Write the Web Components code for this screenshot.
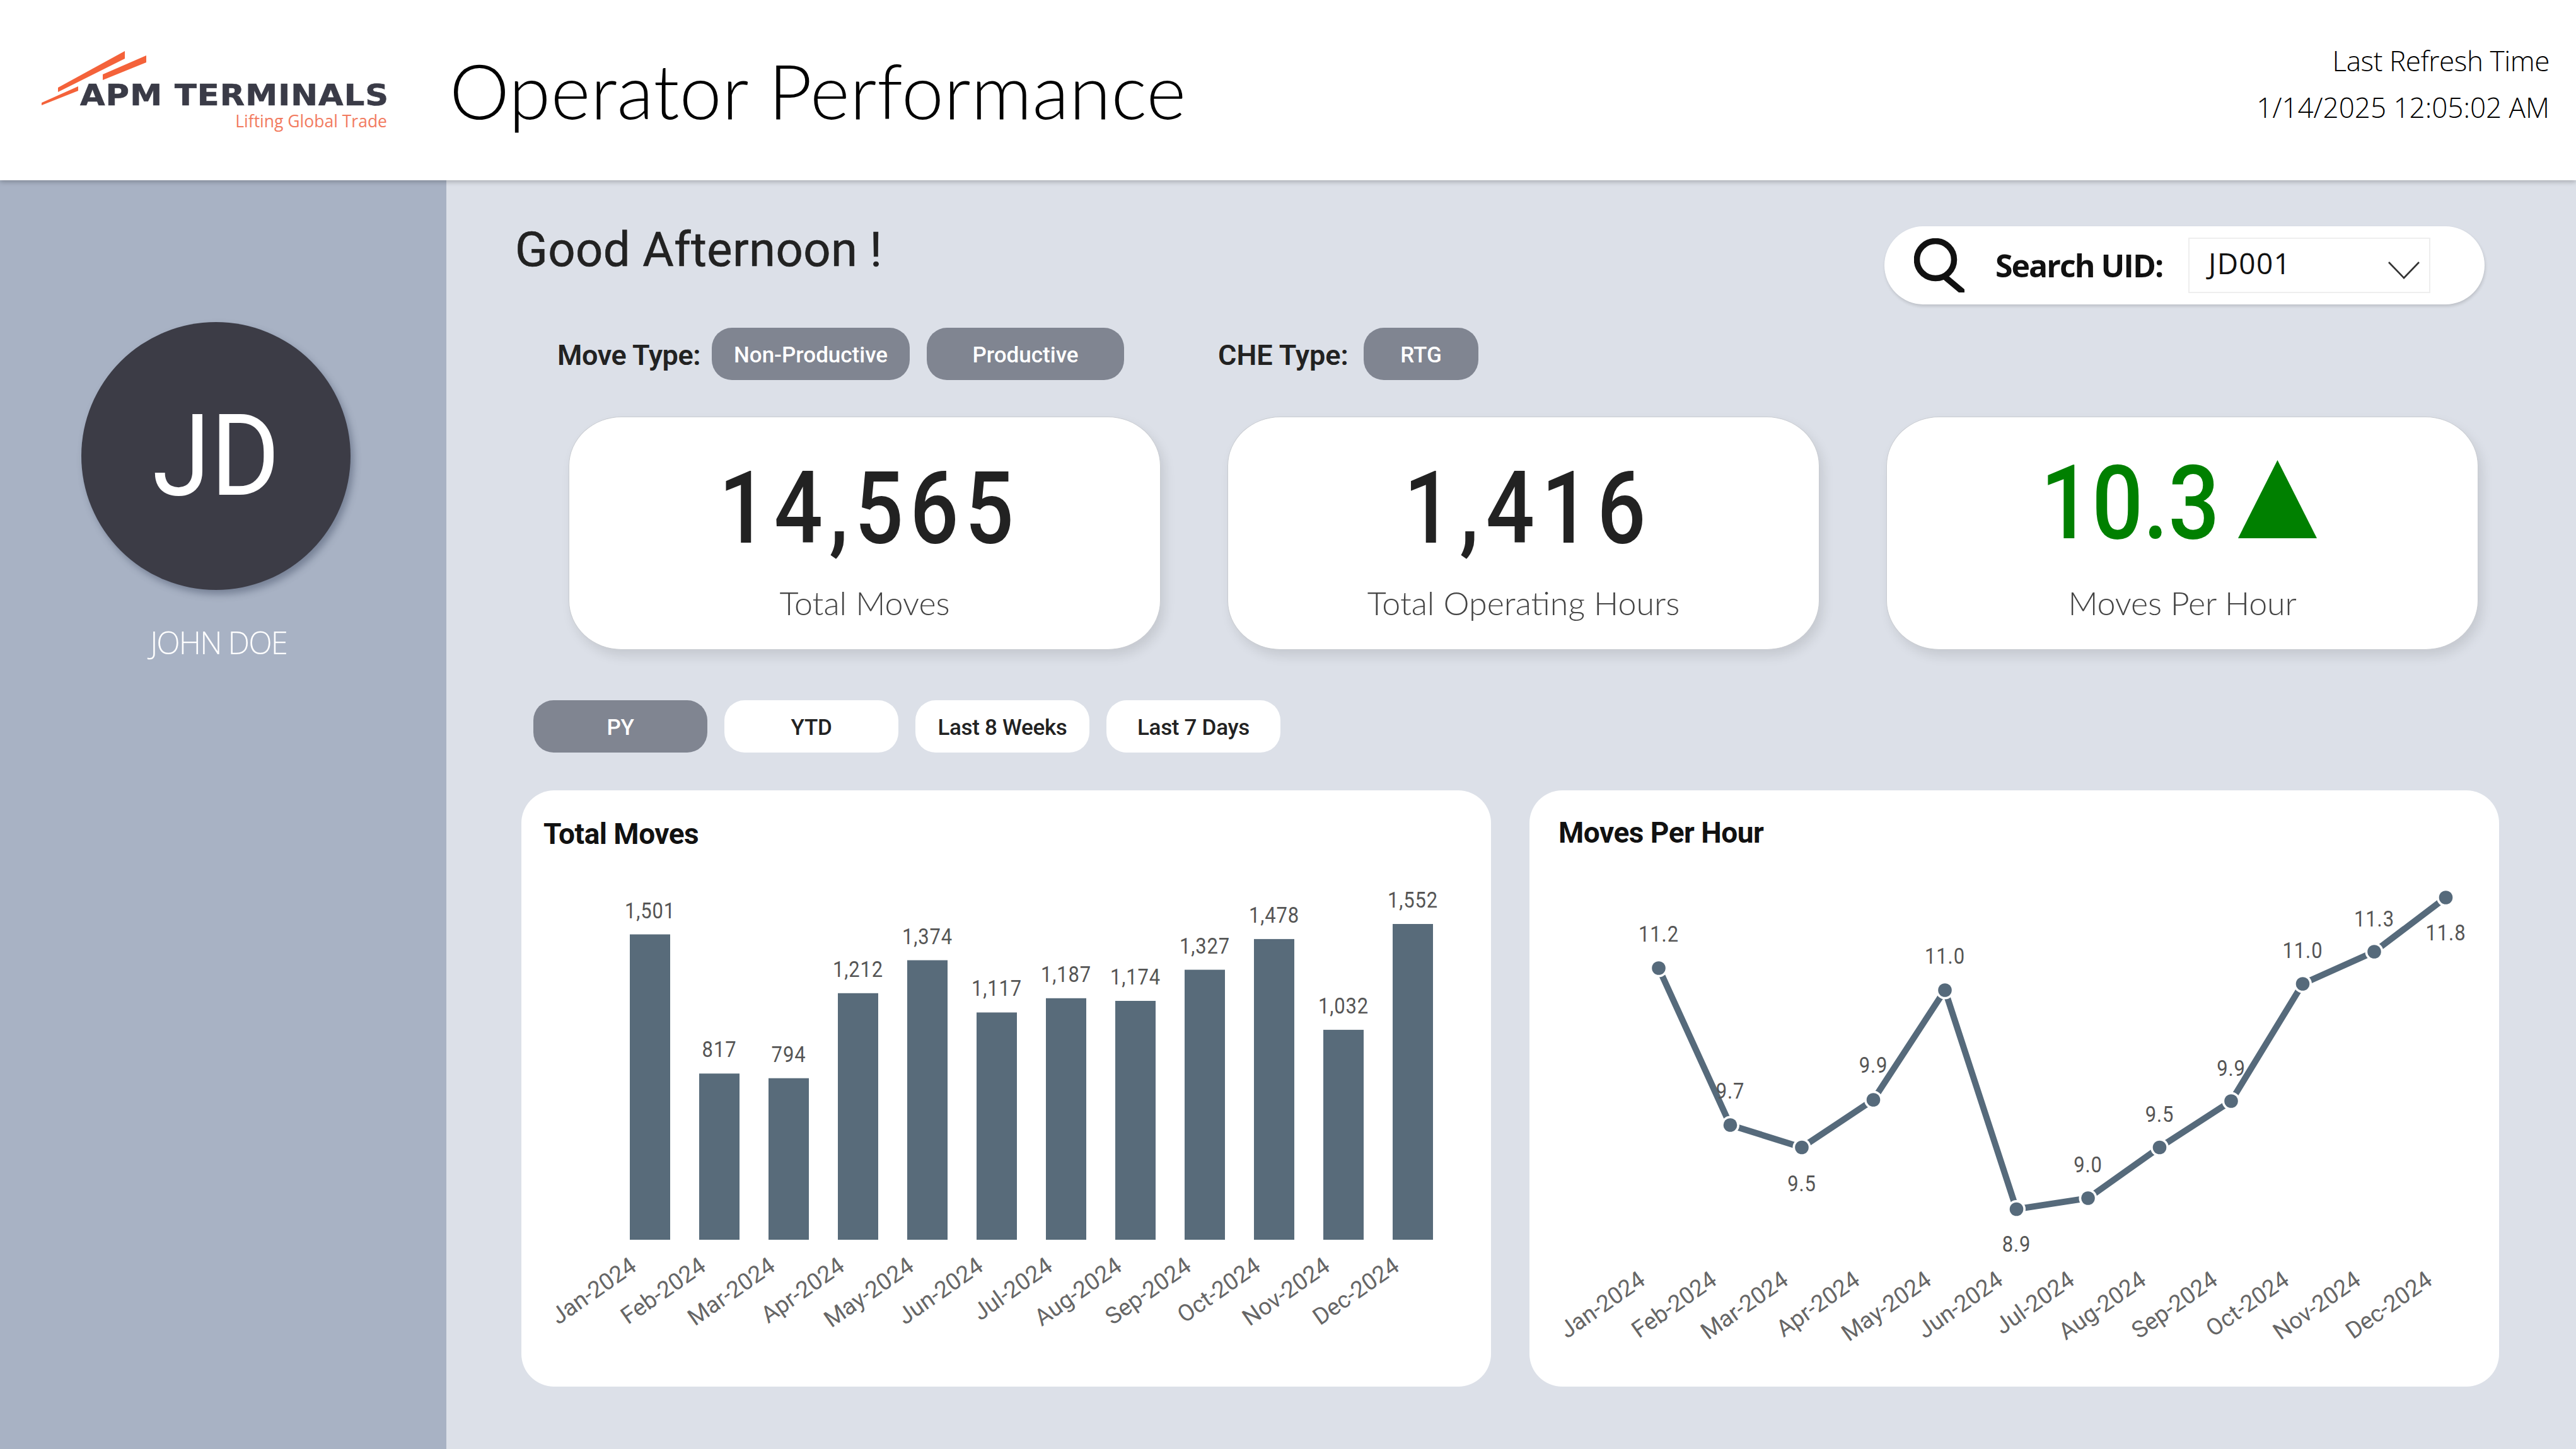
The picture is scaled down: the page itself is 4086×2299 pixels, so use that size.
<!doctype html>
<html lang="en"><head><meta charset="utf-8"><title>Operator Performance</title>
<style>html,body{margin:0;padding:0;background:#DCE0E8}body{width:4086px;height:2299px;overflow:hidden;font-family:"Open Sans",sans-serif}</style>
</head><body>
<op-dashboard>
  <op-header slot="header">
    <op-logo slot="logo"></op-logo>
    <span slot="title">Operator Performance</span>
    <op-refresh slot="refresh" label="Last Refresh Time" time="1/14/2025 12:05:02 AM"></op-refresh>
  </op-header>
  <op-profile slot="side" initials="JD" name="JOHN DOE"></op-profile>
  <op-topline slot="main" greeting="Good Afternoon !"><op-search label="Search UID:" value="JD001"></op-search></op-topline>
  <op-filters slot="main">
    <op-label style="width:250px;--ls:-.4px">Move Type:</op-label>
    <op-pill style="width:314px">Non-Productive</op-pill>
    <op-pill style="width:313px;margin-left:27px">Productive</op-pill>
    <op-label style="width:236px;margin-left:144px">CHE Type:</op-label>
    <op-pill style="width:182px">RTG</op-pill>
  </op-filters>
  <op-kpis slot="main">
    <op-kpi value="14,565" label="Total Moves"></op-kpi>
    <op-kpi value="1,416" label="Total Operating Hours" style="--ls:13px"></op-kpi>
    <op-kpi value="10.3" label="Moves Per Hour" trend style="--vx:-12px;--ls:0px;--sx:.88;--mx:-19px;--w:500;--color:#008000;--size:163px;--top:55px;--gap:46px;--lab-ls:-.2px"></op-kpi>
  </op-kpis>
  <op-tabs slot="main">
    <op-tab active>PY</op-tab><op-tab>YTD</op-tab><op-tab>Last 8 Weeks</op-tab><op-tab>Last 7 Days</op-tab>
  </op-tabs>
  <op-charts slot="main">
    <op-chart kind="bar" heading="Total Moves" style="--tx:35px;--ty:41px"></op-chart>
    <op-chart kind="line" heading="Moves Per Hour" style="--tx:46px;--ty:39px"></op-chart>
  </op-charts>
</op-dashboard>
<script>
const MONTHS=['Jan','Feb','Mar','Apr','May','Jun','Jul','Aug','Sep','Oct','Nov','Dec'];
function def(name,css,html,init){
  customElements.define(name,class extends HTMLElement{
    connectedCallback(){ if(this.shadowRoot)return;
      const r=this.attachShadow({mode:'open'});
      r.innerHTML='<style>'+css+'</style>'+(typeof html==='function'?html(this):html);
      if(init)init(this,r);
    }
  });
}
def('op-dashboard',`
:host{display:grid;width:4086px;height:2299px;grid-template-columns:708px 1fr;grid-template-rows:286px 1fr;background:#DCE0E8}
.h{grid-column:1/3;position:relative;z-index:2;box-shadow:0 3px 7px rgba(0,0,0,.22)}
.s{background:#A8B2C4;min-height:0}
.m{display:flex;flex-direction:column;min-width:0;min-height:0}`,
`<div class="h"><slot name="header"></slot></div><div class="s"><slot name="side"></slot></div><div class="m"><slot name="main"></slot></div>`);

def('op-header',`
:host{display:flex;align-items:flex-start;height:286px;background:#fff}
.logo{margin:75px 0 0 60px}
.title{margin:83px 0 0 93px;font:300 120px/120px Lato,sans-serif;letter-spacing:.5px;color:#000;white-space:nowrap}
.ref{margin:59px 42px 0 auto}`,
`<div class="logo"><slot name="logo"></slot></div><div class="title"><slot name="title"></slot></div><div class="ref"><slot name="refresh"></slot></div>`);

def('op-logo',`
:host{display:block;width:560px;height:135px}
svg{display:block}
.a{font:700 46px "DejaVu Sans",sans-serif;letter-spacing:1px;fill:#3A3B47;stroke:#3A3B47;stroke-width:.7}
.b{font:400 26.5px "Open Sans",sans-serif;fill:#F27A5E}`,
`<svg width="560" height="135" viewBox="60 75 560 135">
<polygon points="92,139 198,81 198,93 92,146" fill="#F4623A"/>
<polygon points="163,118 232,88 232,99 163,127" fill="#F4623A"/>
<polygon points="66,163 124,137 124,144 66,167" fill="#F4623A"/>
<text class="a" transform="translate(127 167) scale(1.11 1)">APM TERMINALS</text>
<text class="b" x="614" y="202" text-anchor="end">Lifting Global Trade</text>
</svg>`);

def('op-refresh',`
:host{display:block;text-align:right;font:300 44px/74px "Open Sans",sans-serif;color:#000;white-space:nowrap}
.l{letter-spacing:-.4px}`,
e=>`<div class="l">${e.getAttribute('label')}</div><div>${e.getAttribute('time')}</div>`);

def('op-profile',`
:host{display:flex;flex-direction:column;align-items:center;width:427px;margin:225px 0 0 129px}
.av{width:427px;height:425px;border-radius:50%;background:#3C3C46;color:#fff;display:flex;align-items:center;justify-content:center;
font:400 180px Roboto,sans-serif;box-shadow:5px 7px 12px rgba(60,70,95,.45)}
.av span{display:inline-block;transform:scaleX(.93)}
.n{margin-top:53px;padding-left:8px;font:300 49px/60px "Open Sans",sans-serif;letter-spacing:-1.9px;color:#fff;white-space:nowrap}`,
e=>`<div class="av"><span>${e.getAttribute('initials')}</span></div><div class="n">${e.getAttribute('name')}</div>`);

def('op-topline',`
:host{display:flex;justify-content:space-between;align-items:flex-start;margin-top:72px;padding:0 145px 0 109px;height:125px}
.g{font:400 76px/76px Roboto,sans-serif;letter-spacing:.4px;color:#222;-webkit-text-stroke:.6px #222;white-space:nowrap}`,
e=>`<div class="g">${e.getAttribute('greeting')}</div><slot></slot>`);

def('op-search',`
:host{display:flex;align-items:center;box-sizing:border-box;width:952px;height:124px;margin-top:1px;padding-left:47px;background:#fff;border-radius:62px;box-shadow:1px 3px 5px rgba(0,0,0,.14)}
svg.i{flex:none;display:block}
.l{margin-left:49px;width:267px;font:700 50px "Open Sans",sans-serif;letter-spacing:-2px;color:#111;white-space:nowrap}
.d{box-sizing:border-box;flex:none;display:flex;align-items:center;justify-content:space-between;width:384px;height:88px;margin-left:39px;padding:0 15px 0 30px;border:2px solid #EEE;background:#fff}
.v{font:400 46px "Open Sans",sans-serif;letter-spacing:1.3px;color:#111;padding-bottom:8px}
svg.c{display:block;margin-top:16px}`,
e=>`<svg class="i" width="80" height="86" viewBox="0 0 80 86" fill="none" stroke="#111" stroke-width="9.5" stroke-linecap="round"><circle cx="34" cy="34" r="29.5"/><path d="M51 63 L76 84"/></svg>
<div class="l">${e.getAttribute('label')}</div>
<div class="d"><span class="v">${e.getAttribute('value')}</span><svg class="c" width="50" height="28" viewBox="0 0 50 28" fill="none" stroke="#333" stroke-width="2.6"><path d="M1 1 L25 26 L49 1"/></svg></div>`);

def('op-filters',`:host{display:flex;align-items:center;height:83px;margin-top:37px;padding-left:171px}`,`<slot></slot>`);
def('op-label',`:host{display:block;flex:none;box-sizing:border-box;padding:4px 0 0 5px;font:600 45px Roboto,sans-serif;letter-spacing:var(--ls,0);color:#222;white-space:nowrap}`,`<slot></slot>`);
def('op-pill',`:host{display:flex;flex:none;align-items:center;justify-content:center;box-sizing:border-box;height:83px;padding-top:4px;border-radius:32px;background:#808591;color:#fff;font:500 35px Roboto,sans-serif;white-space:nowrap}`,`<slot></slot>`);

def('op-kpis',`:host{display:grid;grid-template-columns:repeat(3,939px);column-gap:106px;margin-top:58px;padding-left:194px}`,`<slot></slot>`);
def('op-kpi',`
:host{display:flex;flex-direction:column;align-items:center;box-sizing:border-box;height:370px;background:#fff;border:1px solid #C9CCD1;border-radius:84px/78px;box-shadow:6px 10px 18px rgba(0,0,0,.10)}
.v{display:flex;align-items:baseline;margin-top:var(--top,65px);margin-left:var(--vx,16px);font:var(--w,500) var(--size,160px)/var(--size,160px) Roboto,sans-serif;letter-spacing:var(--ls,12px);color:var(--color,#222);white-space:nowrap}
.v span{display:inline-block;margin:0 var(--mx,0);transform:scaleX(var(--sx,.85))}
.v svg{margin-left:29px;display:block}
.l{margin-top:var(--gap,39px);font:300 52px/60px Lato,sans-serif;letter-spacing:var(--lab-ls,0);color:#444;white-space:nowrap}`,
e=>`<div class="v"><span>${e.getAttribute('value')}</span>${e.hasAttribute('trend')?'<svg width="125" height="124" viewBox="0 0 125 124"><polygon points="62.5,0 125,124 0,124" fill="#008000"/></svg>':''}</div><div class="l">${e.getAttribute('label')}</div>`);

def('op-tabs',`:host{display:grid;grid-template-columns:repeat(4,276px);column-gap:27px;margin-top:80px;padding-left:138px}`,`<slot></slot>`);
def('op-tab',`
:host{display:flex;align-items:center;justify-content:center;box-sizing:border-box;height:83px;padding-top:3px;border-radius:32px;background:#fff;color:#222;font:500 35px Roboto,sans-serif;letter-spacing:-.3px;white-space:nowrap}
:host([active]){background:#808591;color:#fff}`,`<slot></slot>`);

def('op-charts',`:host{display:grid;grid-template-columns:repeat(2,1538px);column-gap:61px;margin-top:60px;padding-left:119px}`,`<slot></slot>`);
const BAR=[1501,817,794,1212,1374,1117,1187,1174,1327,1478,1032,1552];
const LINE=[['11.2',1536,1494],['9.7',1785,1743],['9.5',1820.5,1890],['9.9',1745,1702],['11.0',1571,1529],['8.9',1918.5,1986],['9.0',1901,1860],['9.5',1820.5,1780],['9.9',1747,1707],['11.0',1561,1520],['11.3',1510,1470],['11.8',1424,1492]];
function axis(x,y,m){return `<text class="x" x="${x}" y="${y}" text-anchor="end" transform="rotate(-35 ${x} ${y})">${m}-2024</text>`}
function num(x,y,t){return `<text class="n" text-anchor="middle" transform="translate(${x} ${y}) scale(.86 1)">${t}</text>`}
function barSvg(){let s='';BAR.forEach((v,i)=>{const x=999+110*i,h=v*.3228,t=1967-h;
  s+=`<rect x="${x}" y="${t.toFixed(1)}" width="64" height="${h.toFixed(1)}" fill="#586B7A"/>`;
  s+=num(x+32,(t-26).toFixed(1),v.toLocaleString('en-US'));
  s+=axis(x+13,2014,MONTHS[i]);});
  return `<svg width="1538" height="849" viewBox="827 1351 1538 849">${s}</svg>`;}
function lineSvg(){const X=i=>2631+113.5*i;
  let s=`<polyline points="${LINE.map((d,i)=>X(i)+','+d[1]).join(' ')}" fill="none" stroke="#566A7B" stroke-width="10"/>`;
  LINE.forEach((d,i)=>{s+=`<circle cx="${X(i)}" cy="${d[1]}" r="14.5" fill="#fff"/><circle cx="${X(i)}" cy="${d[1]}" r="10.8" fill="#566A7B"/>`;});
  LINE.forEach((d,i)=>{s+=num(X(i),d[2],d[0]);s+=axis(X(i)-19,2036,MONTHS[i]);});
  return `<svg width="1538" height="851" viewBox="2426 1349 1538 851">${s}</svg>`;}
def('op-chart',`
:host{display:block;height:946px;background:#fff;border-radius:52px;overflow:hidden}
.t{padding:var(--ty) 0 0 var(--tx);font:700 46px/56px Roboto,sans-serif;letter-spacing:-.5px;color:#111;white-space:nowrap}
svg{display:block}
.n{font:400 36px Roboto,sans-serif;letter-spacing:1px;fill:#555}
.x{font:400 37px Roboto,sans-serif;fill:#666}`,
e=>`<div class="t">${e.getAttribute('heading')}</div>${e.getAttribute('kind')==='bar'?barSvg():lineSvg()}`);
</script>
</body></html>
